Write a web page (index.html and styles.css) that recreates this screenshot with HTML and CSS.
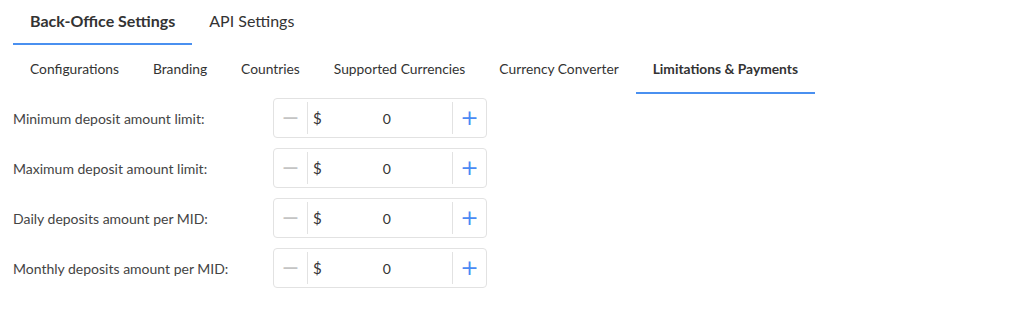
FILE: index.html
```html
<!DOCTYPE html>
<html lang="en">
<head>
  <meta charset="UTF-8">
  <meta name="viewport" content="width=device-width, initial-scale=1.0">
  <title>Settings</title>
  <link rel="stylesheet" href="styles.css">
</head>
<body>
  <div class="container">
    <!-- Main tabs -->
    <nav class="main-tabs">
      <a class="main-tab active">Back-Office Settings</a>
      <a class="main-tab">API Settings</a>
    </nav>

    <!-- Sub tabs -->
    <nav class="sub-tabs">
      <a class="sub-tab">Configurations</a>
      <a class="sub-tab">Branding</a>
      <a class="sub-tab">Countries</a>
      <a class="sub-tab">Supported Currencies</a>
      <a class="sub-tab">Currency Converter</a>
      <a class="sub-tab active">Limitations &amp; Payments</a>
    </nav>

    <form class="limits">
      <div class="row">
        <label>Minimum deposit amount limit:</label>
        <div class="stepper">
          <button type="button" class="step minus">&minus;</button>
          <span class="currency">$</span>
          <input type="text" value="0">
          <button type="button" class="step plus">+</button>
        </div>
      </div>
      <div class="row">
        <label>Maximum deposit amount limit:</label>
        <div class="stepper">
          <button type="button" class="step minus">&minus;</button>
          <span class="currency">$</span>
          <input type="text" value="0">
          <button type="button" class="step plus">+</button>
        </div>
      </div>
      <div class="row">
        <label>Daily deposits amount per MID:</label>
        <div class="stepper">
          <button type="button" class="step minus">&minus;</button>
          <span class="currency">$</span>
          <input type="text" value="0">
          <button type="button" class="step plus">+</button>
        </div>
      </div>
      <div class="row">
        <label>Monthly deposits amount per MID:</label>
        <div class="stepper">
          <button type="button" class="step minus">&minus;</button>
          <span class="currency">$</span>
          <input type="text" value="0">
          <button type="button" class="step plus">+</button>
        </div>
      </div>
    </form>
  </div>
</body>
</html>
```

FILE: styles.css
```css
body {
  font-family: Lato, "Liberation Sans", sans-serif;
  margin: 0;
  padding: 0;
  background-color: #fff;
  color: #333;
}

.container {
  padding: 0 13px;
}

.main-tabs {
  display: flex;
  height: 45px;
}

.main-tab {
  display: flex;
  align-items: center;
  padding: 0 17px 3px 17px;
  font-size: 16px;
  color: #333;
  border-bottom: 2px solid transparent;
  box-sizing: border-box;
  height: 45px;
}

.main-tab.active {
  font-weight: bold;
  border-bottom-color: #4a90f0;
}

.sub-tabs {
  display: flex;
  height: 49px;
}

.sub-tab {
  display: flex;
  align-items: center;
  padding: 0 17px 1px 17px;
  font-size: 13.8px;
  color: #333;
  border-bottom: 2px solid transparent;
  box-sizing: border-box;
  height: 49px;
}

.sub-tab.active {
  font-weight: bold;
  border-bottom-color: #4a90f0;
}

.limits {
  margin-top: 4px;
}

.row {
  display: flex;
  align-items: center;
  height: 40px;
  margin-bottom: 10px;
}

.row label {
  width: 260px;
  font-size: 14px;
  color: #444;
}

.stepper {
  display: flex;
  align-items: center;
  width: 214px;
  height: 40px;
  box-sizing: border-box;
  border: 1px solid #e2e2e2;
  border-radius: 4px;
}

.step {
  width: 34px;
  height: 32px;
  border: none;
  background: none;
  padding: 0;
  font-family: "DejaVu Sans", sans-serif;
  font-size: 22px;
  line-height: 32px;
  cursor: pointer;
}

.minus {
  color: #c4c4c4;
  border-right: 1px solid #e2e2e2;
}

.plus {
  color: #4a8af4;
  border-left: 1px solid #e2e2e2;
}

.currency {
  padding-left: 5px;
  font-size: 15px;
  color: #333;
}

.stepper input {
  flex: 1;
  min-width: 0;
  border: none;
  outline: none;
  font-family: Lato, "Liberation Sans", sans-serif;
  font-size: 14px;
  color: #333;
  text-align: center;
  padding: 0;
}
```
